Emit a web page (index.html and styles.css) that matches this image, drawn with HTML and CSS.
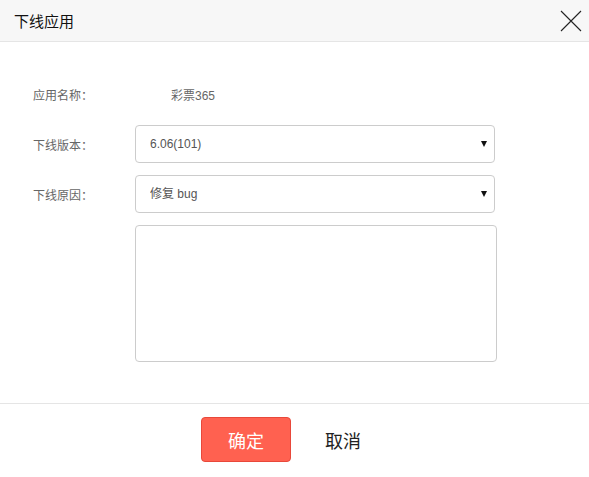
FILE: index.html
```html
<!DOCTYPE html>
<html lang="zh-CN">
<head>
<meta charset="utf-8">
<title>下线应用</title>
<link rel="stylesheet" href="styles.css">
</head>
<body>
<div class="dialog">
  <div class="dialog-header">
    <span class="dialog-title">下线应用</span>
    <button class="close-btn" aria-label="关闭">
      <svg width="22" height="22" viewBox="0 0 22 22"><path d="M1 1 L21 21 M21 1 L1 21" stroke="#222" stroke-width="1.1" fill="none"/></svg>
    </button>
  </div>
  <div class="dialog-body">
    <div class="form-row">
      <label class="form-label">应用名称：</label>
      <span class="form-value">彩票365</span>
    </div>
    <div class="form-row">
      <label class="form-label">下线版本：</label>
      <div class="select-wrap">
        <select class="form-select"><option>6.06(101)</option></select>
      </div>
    </div>
    <div class="form-row">
      <label class="form-label">下线原因：</label>
      <div class="select-wrap">
        <select class="form-select"><option>修复 bug</option></select>
      </div>
    </div>
    <div class="form-row textarea-row">
      <span class="form-label"></span>
      <textarea class="form-textarea"></textarea>
    </div>
  </div>
  <div class="dialog-footer">
    <button class="btn-confirm">确定</button>
    <button class="btn-cancel">取消</button>
  </div>
</div>
</body>
</html>
```

FILE: styles.css
```css
* { box-sizing: border-box; }
html, body {
  margin: 0;
  padding: 0;
  background: #fff;
}
body {
  font-family: "Liberation Sans", "Noto Sans CJK SC", Arial, sans-serif;
  width: 589px;
  height: 477px;
  overflow: hidden;
}
.dialog {
  width: 589px;
}
.dialog-header {
  height: 42px;
  background: #f7f7f7;
  border-bottom: 1px solid #e5e5e5;
  display: flex;
  align-items: center;
  justify-content: space-between;
  padding: 0 7px 0 14px;
}
.dialog-title {
  font-family: "Noto Sans CJK SC", sans-serif;
  font-size: 15px;
  color: #111;
  line-height: 1;
}
.close-btn {
  border: 0;
  background: none;
  padding: 0;
  width: 22px;
  height: 22px;
  display: flex;
  cursor: pointer;
}
.dialog-body {
  padding: 33px 0 0 33px;
  height: 361px;
}
.form-row {
  display: flex;
  align-items: center;
  height: 38px;
  margin-bottom: 12px;
}
.form-label {
  width: 102px;
  flex: none;
  font-size: 12px;
  color: #666;
}
.form-value {
  font-size: 12px;
  color: #666;
  padding-left: 36px;
}
.select-wrap {
  position: relative;
  width: 360px;
  height: 38px;
}
.select-wrap::after {
  content: "";
  position: absolute;
  right: 8px;
  top: 16px;
  border-left: 3px solid transparent;
  border-right: 3px solid transparent;
  border-top: 6px solid #111;
  pointer-events: none;
}
.form-select {
  appearance: none;
  -webkit-appearance: none;
  width: 100%;
  height: 38px;
  border: 1px solid #ccc;
  border-radius: 4px;
  background: #fff;
  font-family: "Liberation Sans", "Noto Sans CJK SC", Arial, sans-serif;
  font-size: 12px;
  color: #555;
  padding: 0 14px;
  outline: none;
}
.textarea-row {
  height: auto;
  align-items: flex-start;
}
.form-textarea {
  width: 362px;
  height: 137px;
  border: 1px solid #ccc;
  border-radius: 4px;
  resize: none;
  outline: none;
  display: block;
}
.dialog-footer {
  border-top: 1px solid #e5e5e5;
  display: flex;
  align-items: center;
  padding: 13px 0 0 201px;
}
.btn-confirm {
  width: 90px;
  height: 45px;
  background: #ff6150;
  border: 1px solid #e8483a;
  border-radius: 4px;
  color: #fff;
  font-size: 18px;
  font-family: "Noto Sans CJK SC", sans-serif;
  padding: 0;
}
.btn-cancel {
  margin-left: 34px;
  border: 0;
  background: none;
  padding: 0;
  font-size: 18px;
  color: #222;
  font-family: "Noto Sans CJK SC", sans-serif;
}
```
